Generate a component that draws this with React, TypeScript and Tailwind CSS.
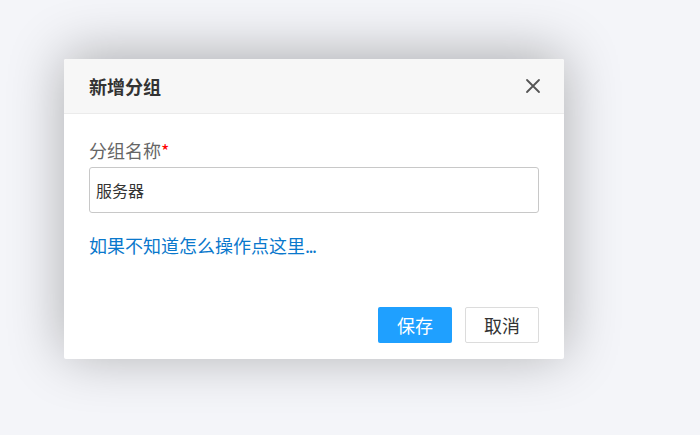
import React, { useState } from 'react';

const font = { fontFamily: '"Microsoft YaHei", "Noto Sans CJK SC", "Noto Sans", sans-serif' };

export default function App() {
  const [name, setName] = useState('服务器');

  return (
    <div className="min-h-[435px] w-[700px] bg-[#f4f5f9] pl-[64px] pt-[59px]" style={font}>
      {/* Dialog */}
      <div className="w-[500px] h-[300px] bg-white rounded-[2px] shadow-[0_-4px_55px_rgba(0,0,0,0.3)] flex flex-col overflow-hidden">
        {/* Header */}
        <div className="h-[55px] shrink-0 bg-[#f7f7f7] border-b border-[#ebebeb] flex items-center justify-between pl-[25px] pr-[22px]">
          <h2 className="text-[18px] leading-[22px] font-bold text-[#333]">新增分组</h2>
          <button className="w-[18px] h-[18px] flex items-center justify-center text-[#555]">
            <svg width="16" height="16" viewBox="0 0 16 16" fill="none" stroke="currentColor" strokeWidth="1.8" strokeLinecap="round">
              <path d="M2 2 L14 14 M14 2 L2 14" />
            </svg>
          </button>
        </div>

        {/* Body */}
        <div className="flex-1 flex flex-col px-[25px] pt-[25px] pb-[16px]">
          <label className="text-[18px] leading-[22px] text-[#666]">
            分组名称<span className="text-[#ff0000]">*</span>
          </label>
          <input
            value={name}
            onChange={e => setName(e.target.value)}
            className="mt-[6px] h-[46px] w-full rounded-[3px] border border-[#c8c8c8] px-[6px] text-[16px] text-[#333] outline-none"
            style={font}
          />
          <a className="mt-[21px] text-[18px] leading-[22px] text-[#0a78cc] cursor-pointer">
            如果不知道怎么操作点这里<span className="tracking-[-1.5px]">...</span>
          </a>

          <div className="mt-auto flex justify-end gap-[13px]">
            <button className="w-[74px] h-[36px] rounded-[2px] bg-[#1fa0ff] text-white text-[18px]">保存</button>
            <button className="w-[74px] h-[36px] rounded-[2px] border border-[#dcdcdc] bg-white text-[#333] text-[18px]">取消</button>
          </div>
        </div>
      </div>
    </div>
  );
}
